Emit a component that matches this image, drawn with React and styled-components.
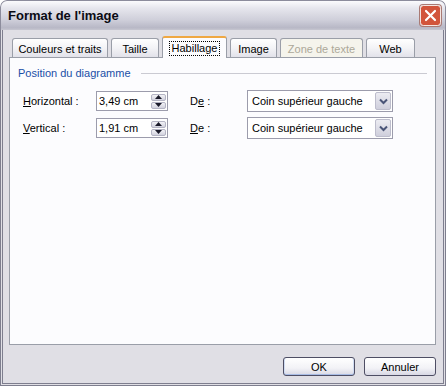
import React from 'react';
import styled, { createGlobalStyle } from 'styled-components';

const GlobalStyle = createGlobalStyle`
  * { box-sizing: border-box; }
  body {
    margin: 0;
    background: #fff;
    font-family: 'Liberation Sans', Arial, sans-serif;
    font-size: 11px;
    color: #000;
  }
`;

// onglets de la boîte de dialogue
const TABS = [
  { label: 'Couleurs et traits', width: 96 },
  { label: 'Taille', width: 48 },
  { label: 'Habillage', width: 65, active: true },
  { label: 'Image', width: 47 },
  { label: 'Zone de texte', width: 83, disabled: true },
  { label: 'Web', width: 49 },
];

const ROWS = [
  { label: 'Horizontal :', key: 'H', rest: 'orizontal :', value: '3,49 cm', de: ['D', 'e', ' :'], deU: 1 },
  { label: 'Vertical :', key: 'V', rest: 'ertical :', value: '1,91 cm', de: ['D', 'e', ' :'], deU: 0 },
];

const App = () => {
  return (
    <>
      <GlobalStyle />
      <Window>
        <TitleBar>
          <Title>Format de l'image</Title>
          <CloseButton>
            <svg width="21" height="21" viewBox="0 0 21 21">
              <rect x="0.5" y="0.5" width="20" height="20" rx="3" fill="#d2553c" stroke="#f4e6e2" />
              <path d="M6 6 L15 15 M15 6 L6 15" stroke="#ffffff" strokeWidth="2.2" strokeLinecap="round" />
            </svg>
          </CloseButton>
        </TitleBar>

        <Body>
          <TabStrip>
            {TABS.map((t) => (
              <Tab key={t.label} $width={t.width} $active={t.active} $disabled={t.disabled}>
                {t.active ? <Focus>{t.label}</Focus> : t.label}
              </Tab>
            ))}
          </TabStrip>

          <Panel>
            <GroupHeader>
              <GroupTitle>Position du diagramme</GroupTitle>
              <GroupLine />
            </GroupHeader>

            <Rows>
              {ROWS.map((r) => (
                <Row key={r.label}>
                  <Label>
                    <u>{r.key}</u>
                    {r.rest}
                  </Label>
                  <Input>
                    <span>{r.value}</span>
                    <Spinner>
                      <SpinButton>
                        <svg width="7" height="4" viewBox="0 0 7 4">
                          <path d="M0 4 L3.5 0 L7 4 Z" fill="#1a1a2a" />
                        </svg>
                      </SpinButton>
                      <SpinButton>
                        <svg width="7" height="4" viewBox="0 0 7 4">
                          <path d="M0 0 L3.5 4 L7 0 Z" fill="#1a1a2a" />
                        </svg>
                      </SpinButton>
                    </Spinner>
                  </Input>
                  <DeLabel>
                    {r.de.map((c, i) => (i === r.deU ? <u key={i}>{c}</u> : <span key={i}>{c}</span>))}
                  </DeLabel>
                  <Select>
                    <span>Coin supérieur gauche</span>
                    <DropButton>
                      <svg width="9" height="7" viewBox="0 0 9 7">
                        <path d="M1 1.5 L4.5 5 L8 1.5" stroke="#4a5578" strokeWidth="2" fill="none" />
                      </svg>
                    </DropButton>
                  </Select>
                </Row>
              ))}
            </Rows>
          </Panel>

          <Footer>
            <Button $default>OK</Button>
            <Button>Annuler</Button>
          </Footer>
        </Body>
      </Window>
    </>
  );
};

const Window = styled.div`
  width: 446px;
  height: 386px;
  display: flex;
  flex-direction: column;
  background-color: #e0dfe5;
  border-radius: 7px 7px 0 0;
  overflow: hidden;
`;

const TitleBar = styled.div`
  height: 30px;
  flex-shrink: 0;
  display: flex;
  align-items: center;
  justify-content: space-between;
  padding: 0 4px 1px 7px;
  background-color: #d4d4de;
  background-image: linear-gradient(to bottom, #fbfbfd 0%, #e6e6ed 25%, #cfcfda 65%, #b8b8c6 92%, #c6c6d0 100%);
  border: 1px solid #8c8c9c;
  border-bottom: none;
  border-radius: 7px 7px 0 0;
`;

const Title = styled.div`
  font-family: 'Liberation Sans', Arial, sans-serif;
  font-weight: bold;
  font-size: 13px;
  color: #0b0b14;
`;

const CloseButton = styled.div`
  width: 21px;
  height: 21px;
  display: flex;
  border-radius: 3px;
  box-shadow: 0 0 0 1px #a97a74;
`;

const Body = styled.div`
  flex: 1;
  display: flex;
  flex-direction: column;
  padding: 6px 7px 7px 6px;
  border: 3px double #7e7e8e;
  border-top: none;
`;

const TabStrip = styled.div`
  height: 21px;
  display: flex;
  align-items: flex-end;
  gap: 3px;
  padding-left: 3px;
`;

const Tab = styled.div`
  position: relative;
  width: ${(p) => p.$width}px;
  height: ${(p) => (p.$active ? 22 : 19)}px;
  margin-bottom: ${(p) => (p.$active ? -1 : 0)}px;
  z-index: ${(p) => (p.$active ? 1 : 0)};
  display: flex;
  align-items: center;
  justify-content: center;
  padding-top: ${(p) => (p.$active ? 0 : 1)}px;
  border: 1px solid #9a9ea8;
  border-bottom: none;
  border-top: ${(p) => (p.$active ? '2px solid #efa843' : '1px solid #9a9ea8')};
  border-radius: 3px 3px 0 0;
  color: ${(p) => (p.$disabled ? '#aca899' : '#000')};
  background-color: ${(p) => (p.$active ? '#fcfcfe' : p.$disabled ? '#f5f4ec' : '#efeff3')};
  background-image: ${(p) =>
    p.$active || p.$disabled ? 'none' : 'linear-gradient(to bottom, #ffffff, #f3f3f6 50%, #e2e2ea)'};
  white-space: nowrap;
`;

const Focus = styled.span`
  border: 1px dotted #000;
  padding: 0 2px 1px;
`;

const Panel = styled.div`
  width: 427px;
  height: 288px;
  padding: 8px 8px 0;
  border: 1px solid #9a9ea8;
  background-color: #fcfcfe;
`;

const GroupHeader = styled.div`
  display: flex;
  align-items: center;
  height: 14px;
`;

const GroupTitle = styled.span`
  color: #1a4ea6;
  white-space: nowrap;
`;

const GroupLine = styled.div`
  flex: 1;
  height: 1px;
  margin-left: 10px;
  background-color: #cacad2;
`;

const Rows = styled.div`
  display: flex;
  flex-direction: column;
  gap: 5px;
  margin-top: 10px;
  padding-left: 5px;
`;

const Row = styled.div`
  display: flex;
  align-items: center;
  height: 22px;
`;

const Label = styled.div`
  width: 73px;
`;

const Input = styled.div`
  width: 72px;
  height: 20px;
  display: flex;
  align-items: center;
  padding-left: 2px;
  border: 1px solid #9c9cac;
  background-color: #fff;
`;

const Spinner = styled.div`
  margin-left: auto;
  margin-right: 1px;
  display: flex;
  flex-direction: column;
  gap: 1px;
`;

const SpinButton = styled.div`
  width: 15px;
  height: 7px;
  display: flex;
  align-items: center;
  justify-content: center;
  border: 1px solid #b4b4c4;
  border-radius: 2px;
  background-color: #e2e2ea;
  background-image: linear-gradient(to bottom, #f2f2f6, #d2d2de);
`;

const DeLabel = styled.div`
  width: 57px;
  margin-left: 22px;
`;

const Select = styled.div`
  width: 146px;
  height: 22px;
  display: flex;
  align-items: center;
  padding-left: 4px;
  border: 1px solid #9c9cac;
  background-color: #fff;
`;

const DropButton = styled.div`
  margin-left: auto;
  margin-right: 1px;
  width: 16px;
  height: 18px;
  display: flex;
  align-items: center;
  justify-content: center;
  border: 1px solid #bdbdcc;
  border-radius: 2px;
  background-color: #dedee8;
  background-image: linear-gradient(to bottom, #ececf2, #cfcfdc);
`;

const Footer = styled.div`
  display: flex;
  justify-content: flex-end;
  gap: 9px;
  margin-top: 12px;
`;

const Button = styled.div`
  width: 72px;
  height: 19px;
  display: flex;
  align-items: center;
  justify-content: center;
  border: 1px solid #4e4e64;
  border-radius: 3px;
  background-color: #ececf2;
  background-image: linear-gradient(to bottom, #ffffff, #f2f2f6 60%, #d8d8e4);
  box-shadow: ${(p) =>
    p.$default ? 'inset 0 -1px 0 #a8bce4, inset 1px 0 0 #d0dcf2, inset -1px 0 0 #d0dcf2' : 'none'};
`;

export default App;
